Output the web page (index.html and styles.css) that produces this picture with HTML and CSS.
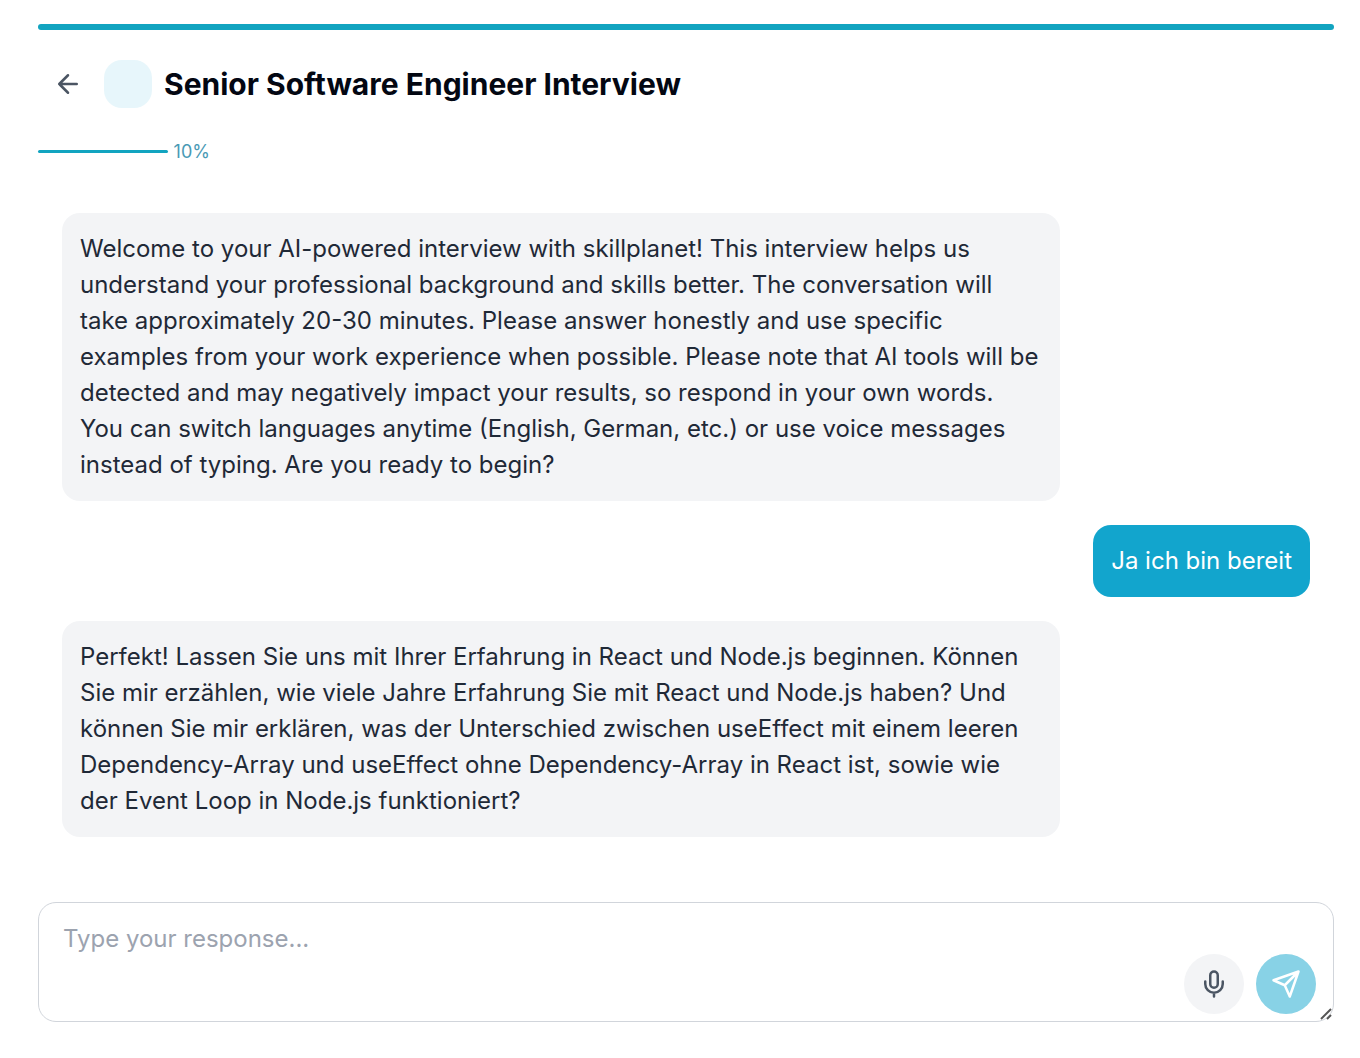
FILE: index.html
```html
<!DOCTYPE html>
<html lang="en">
<head>
<meta charset="utf-8">
<meta name="viewport" content="width=device-width, initial-scale=1">
<title>Senior Software Engineer Interview</title>
<link rel="stylesheet" href="styles.css">
</head>
<body>
<main class="page">
  <div class="top-bar"></div>
  <header class="header">
    <button class="back" type="button" aria-label="Back">
      <svg viewBox="0 0 24 24" class="icon"><path d="M19 12H5M12 19l-7-7 7-7"/></svg>
    </button>
    <span class="avatar"></span>
    <h1 class="title">Senior Software Engineer Interview</h1>
  </header>
  <div class="progress">
    <div class="progress-fill" style="width: 10%"></div>
    <span class="progress-label">10%</span>
  </div>
  <section class="messages">
    <p class="bubble bubble-bot">Welcome to your AI-powered interview with skillplanet! This interview helps us understand your professional background and skills better. The conversation will take approximately 20-30 minutes. Please answer honestly and use specific examples from your work experience when possible. Please note that AI tools will be detected and may negatively impact your results, so respond in your own words. You can switch languages anytime (English, German, etc.) or use voice messages instead of typing. Are you ready to begin?</p>
    <p class="bubble bubble-user" lang="de">Ja ich bin bereit</p>
    <p class="bubble bubble-bot" lang="de">Perfekt! Lassen Sie uns mit Ihrer Erfahrung in React und Node.js beginnen. Können Sie mir erzählen, wie viele Jahre Erfahrung Sie mit React und Node.js haben? Und können Sie mir erklären, was der Unterschied zwischen useEffect mit einem leeren Dependency-Array und useEffect ohne Dependency-Array in React ist, sowie wie der Event Loop in Node.js funktioniert?</p>
  </section>
  <form class="composer">
    <textarea class="input" aria-label="Your response" placeholder="Type your response..."></textarea>
    <svg viewBox="0 0 12 12" class="grip" aria-hidden="true"><path d="M1 11 11 1M7 11l4-4"/></svg>
    <div class="actions">
      <button class="round round-mic" type="button" aria-label="Record voice message">
        <svg viewBox="0 0 24 24" class="icon"><path d="M12 2a3 3 0 0 0-3 3v7a3 3 0 0 0 6 0V5a3 3 0 0 0-3-3z"/><path d="M19 10v2a7 7 0 0 1-14 0v-2M12 19v3"/></svg>
      </button>
      <button class="round round-send" type="submit" aria-label="Send">
        <svg viewBox="0 0 24 24" class="icon"><path d="M22 2 15 22l-4-9-9-4zM22 2 11 13"/></svg>
      </button>
    </div>
  </form>
</main>
</body>
</html>
```
FILE: styles.css
```css
* {
  box-sizing: border-box;
}

body {
  margin: 0;
  background: #fff;
  color: #1f2937;
  font-family: Inter, "Liberation Sans", sans-serif;
  font-size: 24px;
  line-height: 36px;
}

button {
  display: flex;
  align-items: center;
  justify-content: center;
  padding: 0;
  border: 0;
  background: none;
  cursor: pointer;
}

svg {
  fill: none;
  stroke: currentColor;
  stroke-width: 2;
  stroke-linecap: round;
  stroke-linejoin: round;
}

.page {
  padding: 24px 26px 36px 38px;
}

.top-bar {
  height: 6px;
  border-radius: 3px;
  background: #12a4c0;
}

.header {
  display: flex;
  align-items: center;
  padding: 30px 12px;
}

.back {
  width: 36px;
  height: 36px;
  color: #4b5563;
}

.icon {
  width: 30px;
  height: 30px;
}

.avatar {
  width: 48px;
  height: 48px;
  margin: 0 12px 0 18px;
  border-radius: 18px;
  background: #e7f6fb;
}

.title {
  margin: 0;
  color: #030712;
  font-size: 30px;
  font-weight: 700;
  line-height: 36px;
}

.progress {
  display: flex;
  align-items: center;
  gap: 6px;
  height: 27px;
}

.progress-fill {
  height: 3px;
  border-radius: 2px;
  background: #12a4c0;
}

.progress-label {
  color: #4a9ab5;
  font-size: 18px;
  line-height: 27px;
}

.messages {
  display: flex;
  flex-direction: column;
  gap: 24px;
  padding: 48px 24px 65px;
}

.bubble {
  max-width: 80%;
  margin: 0;
  padding: 18px;
  border-radius: 18px;
}

.bubble-bot {
  align-self: flex-start;
  background: #f3f4f6;
}

.bubble-user {
  align-self: flex-end;
  background: #12a5cd;
  color: #fff;
}

.composer {
  position: relative;
}

.input {
  display: block;
  width: 100%;
  height: 120px;
  padding: 18px 150px 17px 24px;
  border: 1px solid #d1d5db;
  border-radius: 18px;
  background: #fff;
  color: inherit;
  font: inherit;
  resize: vertical;
}

.input::placeholder {
  color: #9ca3af;
}

.input::-webkit-resizer {
  background: transparent;
}

.grip {
  position: absolute;
  right: 2px;
  bottom: 2px;
  width: 12px;
  height: 12px;
  color: #555;
  stroke-width: 2;
  stroke-linecap: butt;
  pointer-events: none;
}

.actions {
  position: absolute;
  right: 18px;
  bottom: 8px;
  display: flex;
  gap: 12px;
}

.round {
  width: 60px;
  height: 60px;
  border-radius: 50%;
}

.round-mic {
  background: #f3f4f6;
  color: #4b5563;
}

.round-send {
  background: #88d2e6;
  color: #fff;
}
```
